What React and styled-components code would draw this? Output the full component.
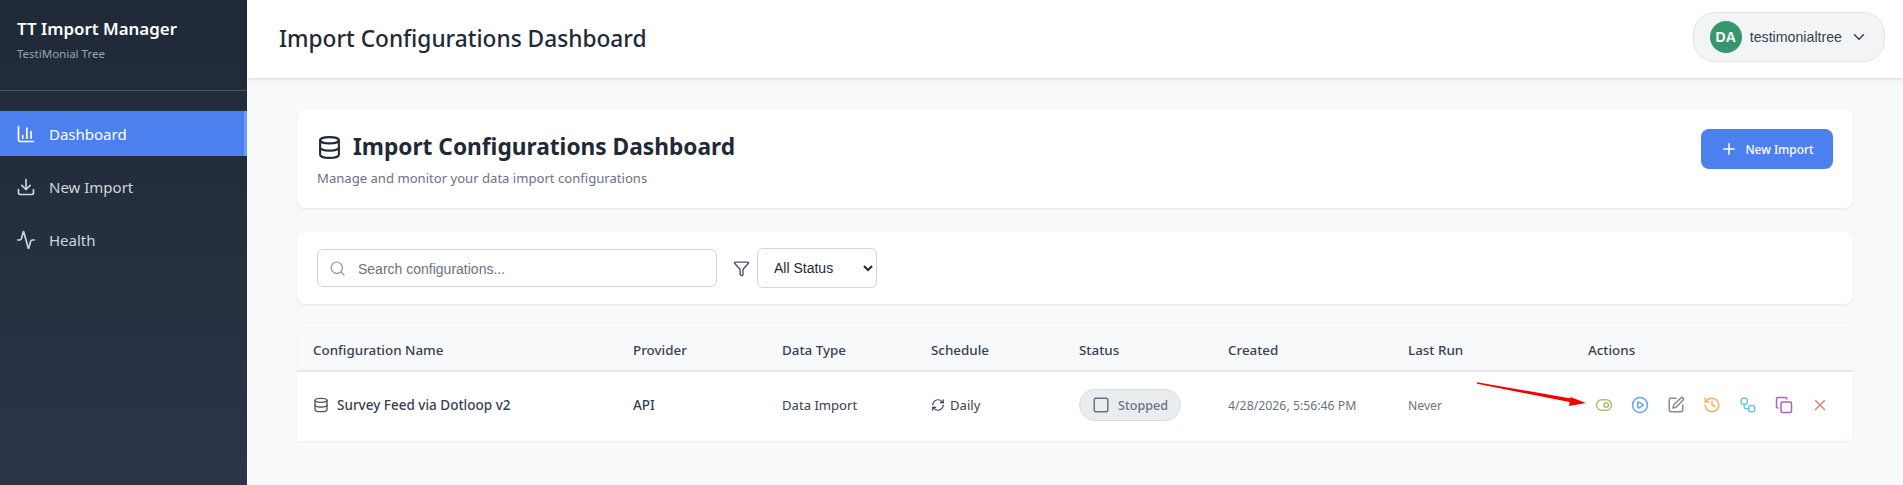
import React from 'react'
import styled, { createGlobalStyle } from 'styled-components'
import {
  Activity, ChartColumn, ChevronDown, Copy, Database, Download, Funnel, History, Plus,
  RefreshCw, Search, CirclePlay, SquarePen, Square, ToggleRight, Workflow, X,
} from 'lucide-react'

const Global = createGlobalStyle`
  * { box-sizing: border-box; }
  html, body { margin: 0; height: 100%; overflow: hidden; }
  body { font-family: 'Noto Sans', 'Liberation Sans', sans-serif; background: #f8f9fb; color: #1f2937; }
`

const Shell = styled.div`
  display: flex;
  height: 485px;
`
const Sidebar = styled.aside`
  width: 247px;
  flex-shrink: 0;
  background: linear-gradient(180deg, #1f2937 0%, #2a3548 100%);
  color: #fff;
`
const Brand = styled.div`
  height: 91px;
  padding: 17px 17px 0;
  border-bottom: 1px solid #4a5361;
`
const BrandName = styled.h1`
  margin: 0;
  font-size: 16.9px;
  line-height: 24px;
  font-weight: 600;
`
const BrandSub = styled.div`
  margin-top: 5px;
  font-size: 11.5px;
  line-height: 16px;
  color: #9ca3af;
`
const Nav = styled.nav`
  margin-top: 20px;
  display: flex;
  flex-direction: column;
  gap: 8px;
`
const NavItem = styled.a`
  display: flex;
  align-items: center;
  gap: 13px;
  height: 45px;
  padding-left: 16px;
  font-size: 15px;
  color: ${p => (p.$active ? '#fff' : '#d1d5db')};
  background: ${p => (p.$active ? '#4b80ee' : 'transparent')};
  border-right: 3px solid ${p => (p.$active ? '#6d9bf5' : 'transparent')};
`
const Main = styled.div`
  flex: 1;
  min-width: 0;
  position: relative;
`
const TopBar = styled.header`
  height: 78px;
  background: #fff;
  box-shadow: 0 1px 3px rgba(0, 0, 0, 0.14);
  display: flex;
  align-items: center;
  justify-content: space-between;
  padding: 0 18px 4px 32px;
`
const PageTitle = styled.div`
  margin-top: 2px;
  font-size: 22.7px;
  font-weight: 500;
  color: #1f2937;
`
const UserChip = styled.div`
  display: flex;
  align-items: center;
  height: 50px;
  padding: 0 16px;
  gap: 8px;
  background: #f3f4f6;
  border: 1px solid #e1e3e6;
  border-radius: 22px;
  font-family: 'Liberation Sans', sans-serif;
  font-size: 14.2px;
  color: #374151;
`
const Avatar = styled.div`
  width: 32px;
  height: 32px;
  border-radius: 50%;
  background: #38966c;
  color: #fff;
  font-weight: 700;
  font-size: 14px;
  display: flex;
  align-items: center;
  justify-content: center;
`
const Content = styled.main`
  padding: 31px 50px 0 50px;
  display: flex;
  flex-direction: column;
  gap: 24px;
`
const Card = styled.section`
  background: #fff;
  border-radius: 8px;
  box-shadow: 0 1px 3px rgba(0, 0, 0, 0.08);
`
const HeadCard = styled(Card)`
  height: 99px;
  padding: 20px 20px 0;
  display: flex;
  align-items: flex-start;
  justify-content: space-between;
`
const HeadTitle = styled.h2`
  margin: 1px 0 0;
  display: flex;
  align-items: center;
  gap: 11px;
  font-size: 22.7px;
  line-height: 34px;
  font-weight: 700;
  color: #1f2937;
`
const HeadSub = styled.p`
  margin: 5px 0 0;
  font-size: 13.1px;
  line-height: 18px;
  color: #6b7280;
`
const PrimaryButton = styled.button`
  display: flex;
  align-items: center;
  gap: 7px;
  width: 132px;
  height: 40px;
  justify-content: center;
  border: 0;
  border-radius: 8px;
  background: #4b80ee;
  color: #fff;
  font-family: inherit;
  font-size: 11.9px;
  font-weight: 500;
`
const FilterCard = styled(Card)`
  height: 72px;
  padding: 0 20px;
  display: flex;
  align-items: center;
`
const SearchBox = styled.label`
  width: 400px;
  height: 38px;
  border: 1px solid #d1d5db;
  border-radius: 6px;
  display: flex;
  align-items: center;
  gap: 12px;
  padding-left: 11px;
  color: #9ca3af;
`
const SearchInput = styled.input`
  flex: 1;
  min-width: 0;
  padding: 1px 0 0;
  border: 0;
  outline: 0;
  background: transparent;
  font-family: 'Liberation Sans', sans-serif;
  font-size: 14px;
  &::placeholder { color: #6b7280; opacity: 1; }
`
const FilterIcon = styled.span`
  display: flex;
  margin: 0 7px 0 16px;
  color: #4b5563;
`
const StatusSelect = styled.select`
  width: 120px;
  height: 40px;
  padding: 0 8px 0 12px;
  border: 1px solid #d1d5db;
  border-radius: 6px;
  background: #fff;
  font-family: 'Liberation Sans', sans-serif;
  font-size: 14px;
  color: #1f2937;
`
const TableCard = styled(Card)`
  border-radius: 8px 8px 0 0;
  box-shadow: 0 0 2px rgba(0, 0, 0, 0.07);
`
const Row = styled.div`
  display: grid;
  grid-template-columns: 320px 149px 149px 148px 149px 180px 180px 1fr;
  align-items: center;
`
const HeadRow = styled(Row)`
  height: 44px;
  padding-top: 1px;
  background: #f8f9fb;
  border-bottom: 2px solid #e5e7eb;
  border-radius: 8px 8px 0 0;
`
const BodyRow = styled(Row)`
  height: 70px;
  padding-bottom: 3px;
  border-bottom: 1px solid #f1f2f4;
`
const Th = styled.div`
  padding-left: 16px;
  font-size: 13.4px;
  font-weight: 500;
  color: #374151;
`
const Td = styled.div`
  padding-left: 16px;
  display: flex;
  align-items: center;
  gap: ${p => p.$gap || 0}px;
  font-size: ${p => p.$size || 13.1}px;
  font-weight: ${p => p.$weight || 400};
  color: ${p => p.$color || '#374151'};
`
const Badge = styled.span`
  display: inline-flex;
  align-items: center;
  gap: 8px;
  height: 32px;
  padding: 0 12px;
  border-radius: 16px;
  background: #e9edf0;
  border: 1px solid #d8dde1;
  font-size: 12.6px;
  font-weight: 500;
  color: #6b7280;
`
const Actions = styled.div`
  padding-left: 14px;
  display: flex;
  align-items: center;
`
const ActionButton = styled.span`
  width: 36px;
  height: 32px;
  display: flex;
  align-items: center;
  justify-content: center;
  color: ${p => p.$color};
`
const ArrowOverlay = styled.svg`
  position: absolute;
  left: 1228px;
  top: 380px;
  pointer-events: none;
`

const actionIcons = [
  [ToggleRight, '#a9c172'],
  [CirclePlay, '#62a6f2'],
  [SquarePen, '#8a8a8a'],
  [History, '#f9ae64'],
  [Workflow, '#6cc8dd'],
  [Copy, '#ab62c2'],
  [X, '#da8686'],
]

export default function App() {
  return (
    <Shell>
      <Global />
      <Sidebar>
        <Brand>
          <BrandName>TT Import Manager</BrandName>
          <BrandSub>TestiMonial Tree</BrandSub>
        </Brand>
        <Nav>
          <NavItem $active><ChartColumn size={20} />Dashboard</NavItem>
          <NavItem><Download size={20} />New Import</NavItem>
          <NavItem><Activity size={20} />Health</NavItem>
        </Nav>
      </Sidebar>
      <Main>
        <TopBar>
          <PageTitle>Import Configurations Dashboard</PageTitle>
          <UserChip>
            <Avatar>DA</Avatar>
            <span>testimonialtree</span>
            <ChevronDown size={18} />
          </UserChip>
        </TopBar>
        <Content>
          <HeadCard>
            <div>
              <HeadTitle><Database size={25} />Import Configurations Dashboard</HeadTitle>
              <HeadSub>Manage and monitor your data import configurations</HeadSub>
            </div>
            <PrimaryButton><Plus size={18} />New Import</PrimaryButton>
          </HeadCard>
          <FilterCard>
            <SearchBox>
              <Search size={17} />
              <SearchInput placeholder="Search configurations..." />
            </SearchBox>
            <FilterIcon><Funnel size={17} /></FilterIcon>
            <StatusSelect defaultValue="all">
              <option value="all">All Status</option>
            </StatusSelect>
          </FilterCard>
          <TableCard>
            <HeadRow>
              <Th>Configuration Name</Th>
              <Th>Provider</Th>
              <Th>Data Type</Th>
              <Th>Schedule</Th>
              <Th>Status</Th>
              <Th>Created</Th>
              <Th>Last Run</Th>
              <Th>Actions</Th>
            </HeadRow>
            <BodyRow>
              <Td $gap={8} $size={13.5} $weight={500}><Database size={16} color="#4b5563" />Survey Feed via Dotloop v2</Td>
              <Td $size={13.5} $weight={500}>API</Td>
              <Td>Data Import</Td>
              <Td $gap={5}><RefreshCw size={14} />Daily</Td>
              <Td><Badge><Square size={18} />Stopped</Badge></Td>
              <Td $size={12.3} $color="#6b7280">4/28/2026, 5:56:46 PM</Td>
              <Td $size={12.2} $color="#6b7280">Never</Td>
              <Actions>
                {actionIcons.map(([Icon, color], i) => (
                  <ActionButton key={i} $color={color}><Icon size={18} /></ActionButton>
                ))}
              </Actions>
            </BodyRow>
          </TableCard>
        </Content>
        <ArrowOverlay width="120" height="32" viewBox="0 0 120 32">
          <polygon points="2,2.2 96,18.5 97,22.5 2,3.8" fill="#f50000" />
          <polygon points="111,23 95.5,17 94,26" fill="#f50000" />
        </ArrowOverlay>
      </Main>
    </Shell>
  )
}
